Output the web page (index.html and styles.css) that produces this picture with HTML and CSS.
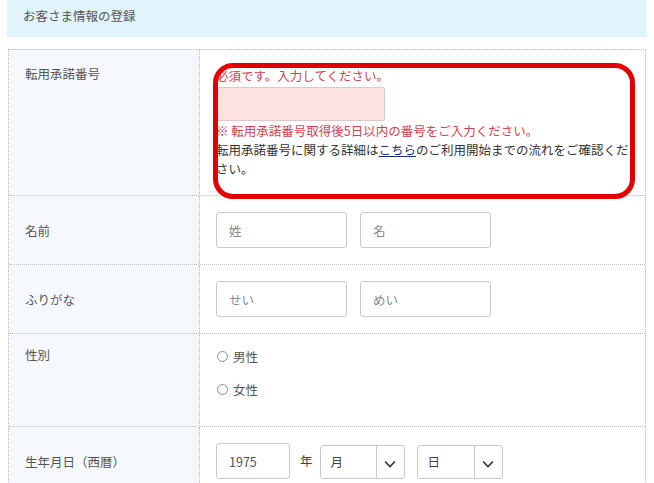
FILE: index.html
```html
<!DOCTYPE html>
<html lang="ja">
<head>
<meta charset="utf-8">
<title>お客さま情報の登録</title>
<link rel="stylesheet" href="styles.css">
</head>
<body>
<div class="page">
  <div class="section-head">お客さま情報の登録</div>
  <div class="form-table">
    <div class="row">
      <div class="label">転用承諾番号</div>
      <div class="value value--annotated">
        <p class="err">必須です。入力してください。</p>
        <input class="field field--error" type="text">
        <p class="err">※ 転用承諾番号取得後5日以内の番号をご入力ください。</p>
        <p class="help">転用承諾番号に関する詳細は<a href="#">こちら</a>のご利用開始までの流れをご確認ください。</p>
        <div class="highlight"></div>
      </div>
    </div>
    <div class="row row--center">
      <div class="label">名前</div>
      <div class="value">
        <div class="pair">
          <input class="field field--name" type="text" placeholder="姓">
          <input class="field field--name" type="text" placeholder="名">
        </div>
      </div>
    </div>
    <div class="row row--center">
      <div class="label">ふりがな</div>
      <div class="value">
        <div class="pair">
          <input class="field field--name" type="text" placeholder="せい">
          <input class="field field--name" type="text" placeholder="めい">
        </div>
      </div>
    </div>
    <div class="row">
      <div class="label label--radio">性別</div>
      <div class="value value--radio">
        <label class="radio"><span class="radio-dot"></span>男性</label>
        <label class="radio"><span class="radio-dot"></span>女性</label>
      </div>
    </div>
    <div class="row row--center">
      <div class="label">生年月日（西暦）</div>
      <div class="value">
        <div class="date">
          <input class="field field--year" type="text" value="1975">
          <span class="unit">年</span>
          <div class="select select--month">
            <span class="select-text">月</span>
            <span class="select-btn"><svg width="12" height="8" viewBox="0 0 12 8"><path d="M1 1.5 L6 6.5 L11 1.5" fill="none" stroke="#333" stroke-width="1.6"/></svg></span>
          </div>
          <div class="select select--day">
            <span class="select-text">日</span>
            <span class="select-btn"><svg width="12" height="8" viewBox="0 0 12 8"><path d="M1 1.5 L6 6.5 L11 1.5" fill="none" stroke="#333" stroke-width="1.6"/></svg></span>
          </div>
        </div>
      </div>
    </div>
  </div>
</div>
</body>
</html>
```

FILE: styles.css
```css
* { box-sizing: border-box; }
html, body { margin: 0; padding: 0; background: #fff; }
body {
  font-family: "Noto Sans CJK JP", "Noto Sans", sans-serif;
  font-size: 12.5px;
  line-height: 19px;
  color: #444;
  overflow: hidden;
}
.page { width: 654px; }
.section-head {
  margin: 0 7px;
  height: 37px;
  padding: 6px 0 0 16px;
  background: #e1f4fb;
  color: #555;
}
.form-table {
  margin: 12px 8px 0;
  border: 1px dotted #b8bcc2;
}
.row {
  display: flex;
  border-top: 1px dotted #b8bcc2;
}
.row:first-child { border-top: none; }
.label {
  width: 191px;
  flex: none;
  background: #f5f9fe;
  border-right: 1px dotted #b8bcc2;
  padding: 14px 16px;
  color: #555;
}
.row--center .label { display: flex; align-items: center; padding-top: 0; padding-bottom: 0; }
.label--radio { padding-top: 11px; }
.value {
  flex: 1;
  padding: 16px 12px 16px 16px;
  min-height: 68px;
}
.value--annotated { position: relative; padding-bottom: 17px; }
.err { margin: 0; color: #d2414f; }
.help { margin: 0; color: #333; }
.help a { color: #1f2b86; text-decoration: underline; }
.field {
  display: block;
  height: 36px;
  border: 1px solid #c9c9c9;
  border-radius: 3px;
  background: #fff;
  font-family: inherit;
  font-size: 12.5px;
  color: #555;
  padding: 0 12px;
  outline: none;
}
.field::placeholder { color: #8a8a8a; }
.field--error {
  width: 168px;
  height: 34px;
  margin: 2px 0 0 1px;
  background: #fde2e2;
  border-color: #d9c9c9;
  border-radius: 2px;
}
.highlight {
  position: absolute;
  left: 13px;
  top: 13px;
  width: 422px;
  height: 136px;
  border: 5px solid #e50000;
  border-radius: 20px;
  pointer-events: none;
}
.pair { display: flex; gap: 13px; }
.field--name { width: 131px; }
.value--radio {
  display: flex;
  flex-direction: column;
  gap: 13px;
  padding-top: 12px;
  padding-bottom: 27px;
}
.radio {
  display: flex;
  align-items: center;
  height: 20px;
  color: #555;
}
.radio-dot {
  width: 11px;
  height: 11px;
  border: 1px solid #8d8d8d;
  border-radius: 50%;
  margin: 0 5px 0 1px;
}
.date { display: flex; align-items: flex-start; }
.field--year { width: 74px; }
.unit { margin: 8px 7px 0 10px; color: #444; }
.select {
  display: flex;
  height: 34px;
  margin-top: 2px;
  border: 1px solid #c9c9c9;
  border-radius: 3px;
  background: #fff;
  margin-right: 12px;
}
.select--month { width: 85px; }
.select--day { width: 86px; }
.select-text { flex: 1; padding: 6px 10px 0; color: #444; }
.select-btn {
  width: 28px;
  border-left: 1px solid #c9c9c9;
  display: flex;
  align-items: center;
  justify-content: center;
  padding-top: 4px;
}
```
